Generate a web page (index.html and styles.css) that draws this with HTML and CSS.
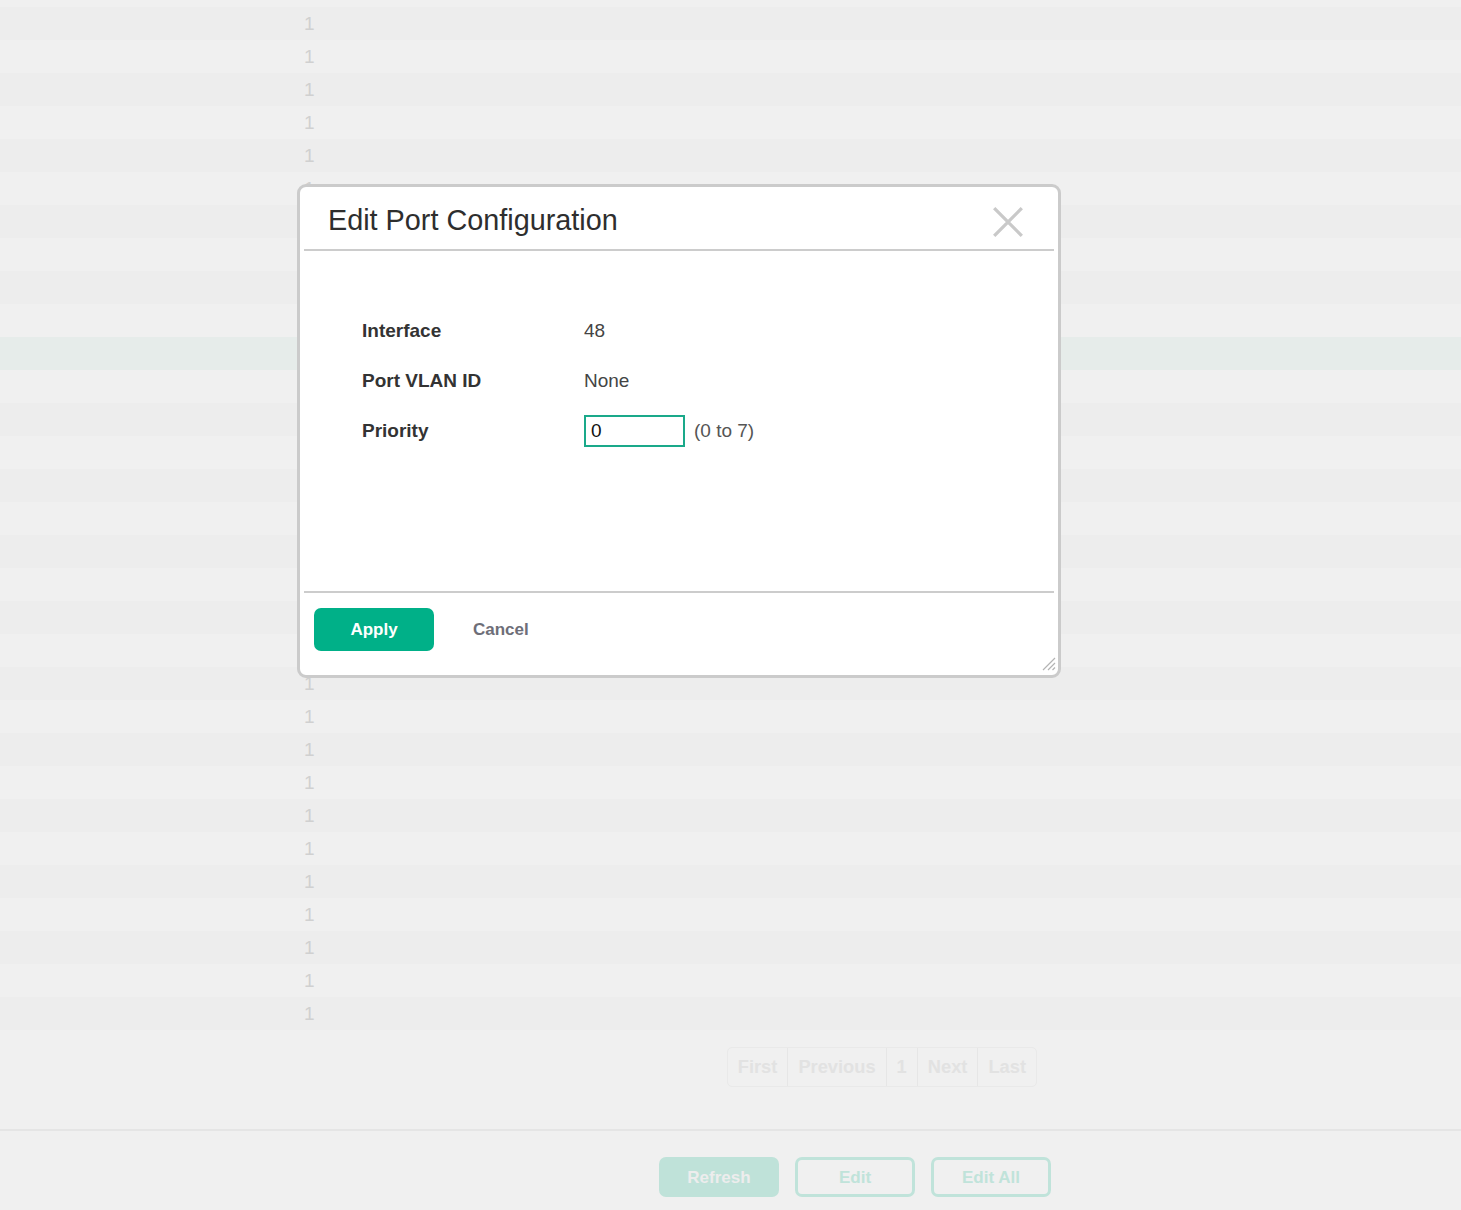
FILE: index.html
```html
<!DOCTYPE html>
<html lang="en">
<head>
<meta charset="utf-8">
<title>Edit Port Configuration</title>
<link rel="stylesheet" href="styles.css">
</head>
<body>
<div class="page">
  <div class="table">
    <div class="row"><span class="cell">1</span></div>
    <div class="row"><span class="cell">1</span></div>
    <div class="row"><span class="cell">1</span></div>
    <div class="row"><span class="cell">1</span></div>
    <div class="row"><span class="cell">1</span></div>
    <div class="row"><span class="cell">1</span></div>
    <div class="row"><span class="cell">1</span></div>
    <div class="row"><span class="cell">1</span></div>
    <div class="row"><span class="cell">1</span></div>
    <div class="row"><span class="cell">1</span></div>
    <div class="row selected"><span class="cell">1</span></div>
    <div class="row"><span class="cell">1</span></div>
    <div class="row"><span class="cell">1</span></div>
    <div class="row"><span class="cell">1</span></div>
    <div class="row"><span class="cell">1</span></div>
    <div class="row"><span class="cell">1</span></div>
    <div class="row"><span class="cell">1</span></div>
    <div class="row"><span class="cell">1</span></div>
    <div class="row"><span class="cell">1</span></div>
    <div class="row"><span class="cell">1</span></div>
    <div class="row"><span class="cell">1</span></div>
    <div class="row"><span class="cell">1</span></div>
    <div class="row"><span class="cell">1</span></div>
    <div class="row"><span class="cell">1</span></div>
    <div class="row"><span class="cell">1</span></div>
    <div class="row"><span class="cell">1</span></div>
    <div class="row"><span class="cell">1</span></div>
    <div class="row"><span class="cell">1</span></div>
    <div class="row"><span class="cell">1</span></div>
    <div class="row"><span class="cell">1</span></div>
    <div class="row"><span class="cell">1</span></div>
  </div>
  <div class="pager">
    <div class="pagination">
      <span class="page-item">First</span>
      <span class="page-item">Previous</span>
      <span class="page-item">1</span>
      <span class="page-item">Next</span>
      <span class="page-item">Last</span>
    </div>
  </div>
  <div class="divider"></div>
  <div class="actions">
    <button class="btn btn-fill">Refresh</button>
    <button class="btn btn-outline">Edit</button>
    <button class="btn btn-outline">Edit All</button>
  </div>
</div>

<div class="modal">
  <div class="modal-header">
    <h1 class="modal-title">Edit Port Configuration</h1>
    <button class="close-btn" aria-label="Close">
      <svg width="30" height="30" viewBox="0 0 30 30"><path d="M1.2 1.2 L28.8 28.8 M28.8 1.2 L1.2 28.8" stroke="#c9c9c9" stroke-width="3.3" fill="none"/></svg>
    </button>
  </div>
  <div class="modal-body">
    <div class="field">
      <span class="label">Interface</span>
      <span class="value">48</span>
    </div>
    <div class="field">
      <span class="label">Port VLAN ID</span>
      <span class="value">None</span>
    </div>
    <div class="field">
      <span class="label">Priority</span>
      <input class="input" type="text" value="0">
      <span class="hint">(0 to 7)</span>
    </div>
  </div>
  <div class="modal-footer">
    <button class="btn-apply">Apply</button>
    <button class="btn-cancel">Cancel</button>
  </div>
  <svg class="resizer" width="16" height="16" viewBox="0 0 16 16"><path d="M15 3 L3 15 M15 8 L8 15 M15 12.5 L12.5 15" stroke="#b4b4b4" stroke-width="1.2" fill="none"/></svg>
</div>
</body>
</html>
```

FILE: styles.css
```css
* { box-sizing: border-box; }

body {
  margin: 0;
  background: #f0f0f0;
  font-family: "Liberation Sans", Arial, sans-serif;
  height: 1210px;
  overflow: hidden;
  position: relative;
}

.table {
  padding-top: 7px;
}

.row {
  height: 33px;
  display: flex;
  align-items: center;
  padding-left: 304px;
  color: #d0d0d0;
  font-size: 19px;
}

.row:nth-child(odd) { background: #ededed; }
.row.selected { background: #e6ecea; }

.pager {
  display: flex;
  justify-content: flex-end;
  padding-right: 424px;
  margin-top: 17px;
}

.pagination {
  display: flex;
  height: 40px;
  border: 1px solid #e9e9e9;
  border-radius: 5px;
}

.page-item {
  display: flex;
  align-items: center;
  padding: 0 10px;
  font-size: 18.3px;
  font-weight: bold;
  color: #e2e2e2;
  border-left: 1px solid #e6e6e6;
}

.page-item:first-child { border-left: none; }

.divider {
  margin-top: 42px;
  border-top: 2px solid #e5e5e5;
}

.actions {
  display: flex;
  justify-content: flex-end;
  gap: 16px;
  padding-right: 410px;
  margin-top: 26px;
}

.btn {
  width: 120px;
  height: 40px;
  border-radius: 7px;
  font-family: "Liberation Sans", Arial, sans-serif;
  font-size: 17px;
  font-weight: bold;
  padding-top: 2px;
}

.btn-fill {
  background: #bfe2d9;
  color: #ededed;
  border: none;
}

.btn-outline {
  background: transparent;
  border: 3px solid #c0e3da;
  color: #c0e3da;
}

/* modal */
.modal {
  position: absolute;
  left: 297px;
  top: 184px;
  width: 764px;
  height: 494px;
  border: 3px solid #cbcbcb;
  border-radius: 9px;
  background: #fff;
  padding: 0 4px;
  display: flex;
  flex-direction: column;
}

.modal-header {
  height: 64px;
  display: flex;
  justify-content: space-between;
  align-items: flex-start;
  border-bottom: 2px solid #cccccc;
  padding: 16px 31px 0 24px;
}

.modal-title {
  margin: 0;
  font-size: 28.8px;
  line-height: 34px;
  font-weight: normal;
  color: #2e2e2e;
}

.close-btn {
  margin-top: 4px;
  width: 30px;
  height: 30px;
  padding: 0;
  border: none;
  background: none;
  display: block;
}

.close-btn svg { display: block; }

.modal-body {
  flex: 1;
  padding: 55px 0 0 58px;
}

.field {
  height: 50px;
  display: flex;
  align-items: center;
  font-size: 19px;
  line-height: 24px;
}

.label {
  width: 222px;
  font-weight: bold;
  color: #333;
}

.value {
  color: #444;
}

.input {
  width: 101px;
  height: 32px;
  border: 2px solid #1aa98a;
  padding: 0 5px;
  font-family: "Liberation Sans", Arial, sans-serif;
  font-size: 19px;
  color: #111;
  outline: none;
}

.hint {
  margin-left: 9px;
  color: #555;
}

.modal-footer {
  height: 84px;
  border-top: 2px solid #cccccc;
  display: flex;
  align-items: flex-start;
  padding: 15px 0 0 10px;
}

.btn-apply {
  width: 120px;
  height: 43px;
  border: none;
  border-radius: 7px;
  background: #00b088;
  color: #fff;
  font-family: "Liberation Sans", Arial, sans-serif;
  font-size: 17px;
  font-weight: bold;
}

.btn-cancel {
  margin-left: 39px;
  height: 43px;
  padding: 0;
  border: none;
  background: none;
  color: #6e6e78;
  font-family: "Liberation Sans", Arial, sans-serif;
  font-size: 17px;
  font-weight: bold;
}

.resizer {
  position: absolute;
  right: 2px;
  bottom: 4px;
}
```
